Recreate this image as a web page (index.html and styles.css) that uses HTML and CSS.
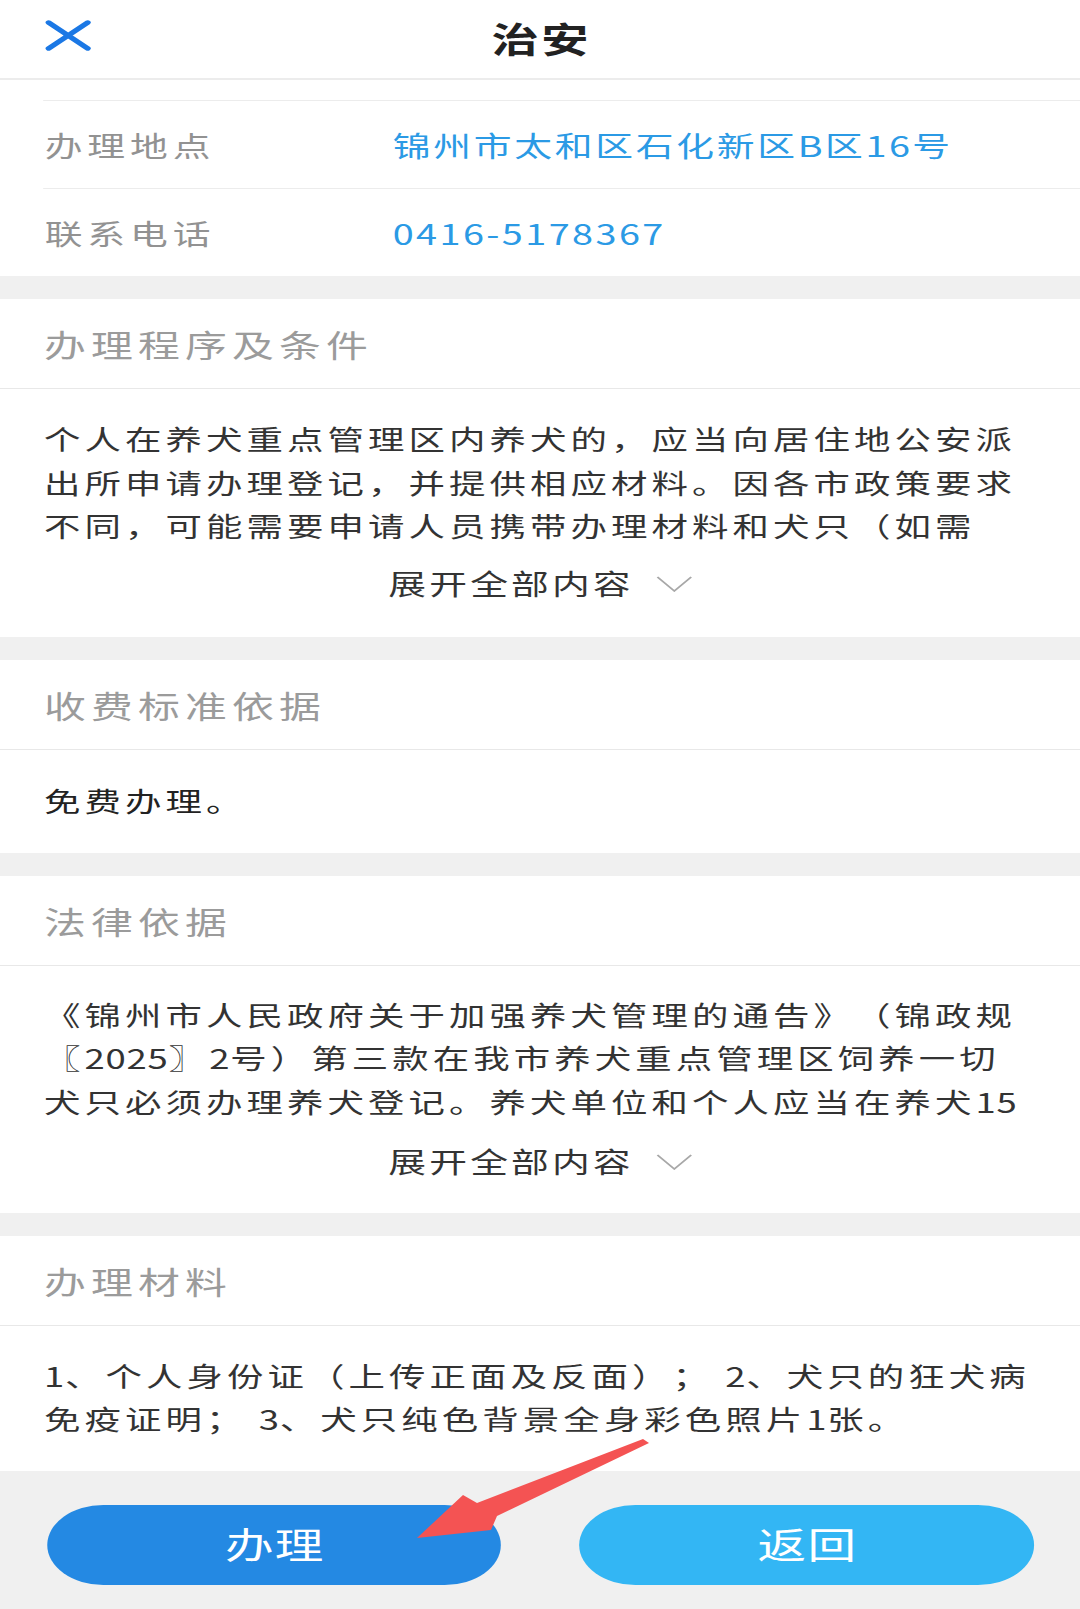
FILE: index.html
```html
<!DOCTYPE html>
<html lang="zh-CN">
<head>
<meta charset="utf-8">
<title>治安</title>
<link rel="stylesheet" href="styles.css">
</head>
<body>
<div class="app">
  <header class="topbar">
    <button class="close" aria-label="关闭">
      <svg width="35" height="33" viewBox="0 0 35 33"><path d="M3 3.5 L32 29.5 M32 3.5 L3 29.5" stroke="#1b78e5" stroke-width="4.4" stroke-linecap="round" fill="none"/></svg>
    </button>
    <h1 class="title">治安</h1>
  </header>

  <section class="info">
    <div class="info-stub"></div>
    <div class="info-row">
      <span class="info-label">办理地点</span>
      <span class="info-value">锦州市太和区石化新区<span class="num">B</span>区<span class="num">16</span>号</span>
    </div>
    <div class="info-row">
      <span class="info-label">联系电话</span>
      <span class="info-value"><span class="num">0416-5178367</span></span>
    </div>
  </section>

  <section class="card">
    <h2 class="card-head">办理程序及条件</h2>
    <div class="card-body">
      <p class="para">个人在养犬重点管理区内养犬的，应当向居住地公安派<br>出所申请办理登记，并提供相应材料。因各市政策要求<br>不同，可能需要申请人员携带办理材料和犬只（如需</p>
      <div class="expand">
        <span class="expand-text">展开全部内容</span>
        <svg class="chevron" width="27" height="16" viewBox="0 0 27 16"><polyline points="1,1 13.5,15 26,1" fill="none" stroke="#a8a8a8" stroke-width="1.5"/></svg>
      </div>
    </div>
  </section>

  <section class="card">
    <h2 class="card-head">收费标准依据</h2>
    <div class="card-body card-body--short">
      <p class="para para--dark">免费办理。</p>
    </div>
  </section>

  <section class="card">
    <h2 class="card-head">法律依据</h2>
    <div class="card-body card-body--law">
      <p class="para">《锦州市人民政府关于加强养犬管理的通告》（锦政规<br>〖<span class="num">2025</span>〗<span class="num">2</span>号）第三款在我市养犬重点管理区饲养一切<br>犬只必须办理养犬登记。养犬单位和个人应当在养犬<span class="num">15</span></p>
      <div class="expand">
        <span class="expand-text">展开全部内容</span>
        <svg class="chevron" width="27" height="16" viewBox="0 0 27 16"><polyline points="1,1 13.5,15 26,1" fill="none" stroke="#a8a8a8" stroke-width="1.5"/></svg>
      </div>
    </div>
  </section>

  <section class="card">
    <h2 class="card-head">办理材料</h2>
    <div class="card-body card-body--materials">
      <p class="para"><span class="num">1</span>、个人身份证（上传正面及反面）； <span class="num">2</span>、犬只的狂犬病<br>免疫证明； <span class="num">3</span>、犬只纯色背景全身彩色照片<span class="num">1</span>张。</p>
    </div>
  </section>

  <footer class="actions">
    <button class="btn btn--primary">办理</button>
    <button class="btn btn--secondary">返回</button>
  </footer>

  <svg class="pointer" width="800" height="1609" viewBox="0 0 1080 1609" preserveAspectRatio="none" aria-hidden="true">
    <polygon points="649,1443 497,1516 491,1530 417,1538 463,1495 477,1503 643,1439" fill="#f45353"/>
  </svg>
</div>
</body>
</html>
```

FILE: styles.css
```css
* { box-sizing: border-box; }

html, body {
  margin: 0;
  padding: 0;
}

body {
  width: 1080px;
  overflow: hidden;
  background: #f0f0f0;
  font-family: "Noto Sans CJK SC", "Noto Sans", sans-serif;
  color: #333;
  text-spacing-trim: space-all;
}

/* The app is laid out at phone width and shown stretched to the 1080px screen */
.app {
  position: relative;
  width: 800px;
  min-height: 1609px;
  background: #f0f0f0;
  display: flex;
  flex-direction: column;
  transform: scaleX(1.35);
  transform-origin: 0 0;
}

/* top bar */
.topbar {
  position: relative;
  height: 80px;
  background: #fff;
  border-bottom: 2px solid #ececec;
  display: flex;
  align-items: center;
  justify-content: center;
}

.close {
  position: absolute;
  left: 33.3px;
  top: 19px;
  width: 35px;
  height: 33px;
  padding: 0;
  border: 0;
  background: none;
  display: block;
}

.close svg { display: block; }

.title {
  margin: 0 0 4px 2px;
  font-size: 35px;
  font-weight: 700;
  letter-spacing: 2px;
  color: #222;
  line-height: 1;
}

/* info rows */
.info {
  background: #fff;
  padding-left: 31.9px;
}

.info-stub {
  height: 20px;
}

.info-row {
  height: 88px;
  border-top: 1px solid #ececec;
  display: flex;
  align-items: center;
  padding-left: 1.2px;
}

.info-label {
  width: 257.8px;
  flex: none;
  font-size: 28px;
  letter-spacing: 3.6px;
  color: #929292;
}

.info-value {
  font-size: 28px;
  letter-spacing: 2px;
  color: #2b9ae5;
}

.info-value .num {
  letter-spacing: 1.8px;
}

.num {
  letter-spacing: 0.6px;
}

/* cards */
.card {
  margin-top: 23px;
  background: #fff;
}

.card-head {
  margin: 0;
  height: 90px;
  border-bottom: 1px solid #e8e8e8;
  display: flex;
  align-items: center;
  padding-left: 32.6px;
  font-size: 31px;
  font-weight: 400;
  letter-spacing: 3.8px;
  color: #9b9b9b;
}

.card-body {
  padding: 28px 20px 32px 32.6px;
}

.card-body--short {
  padding-top: 29px;
  padding-bottom: 30px;
}

.card-body--law {
  padding-top: 27px;
  padding-bottom: 30px;
}

.card-body--materials {
  padding-top: 28px;
  padding-bottom: 30px;
}

.para {
  margin: 0;
  font-size: 27px;
  line-height: 43.5px;
  letter-spacing: 3px;
  color: #333;
  white-space: nowrap;
}

.para--dark { color: #222; }

.expand {
  margin-top: 14px;
  height: 43.5px;
  display: flex;
  align-items: center;
  justify-content: center;
  padding-right: 12px;
}

.card-body--law .expand { margin-top: 16px; }

.expand-text {
  font-size: 28px;
  letter-spacing: 2.3px;
  color: #333;
}

.chevron {
  display: block;
  margin-left: 16.5px;
  margin-top: 2px;
}

/* bottom actions */
.actions {
  flex: 1;
  display: flex;
  gap: 57.8px;
  padding: 34px 34.1px 25px 34.8px;
  background: #f0f0f0;
}

.btn {
  width: 337px;
  height: 80px;
  border: 0;
  border-radius: 41.5px / 40px;
  font-family: inherit;
  font-size: 36px;
  letter-spacing: 1px;
  padding: 0 0 4px 1px;
  color: #fff;
}

.btn--primary { background: #2489e3; }
.btn--secondary { background: #33b6f4; }

/* annotation arrow overlay */
.pointer {
  position: absolute;
  left: 0;
  top: 0;
  pointer-events: none;
}
```
